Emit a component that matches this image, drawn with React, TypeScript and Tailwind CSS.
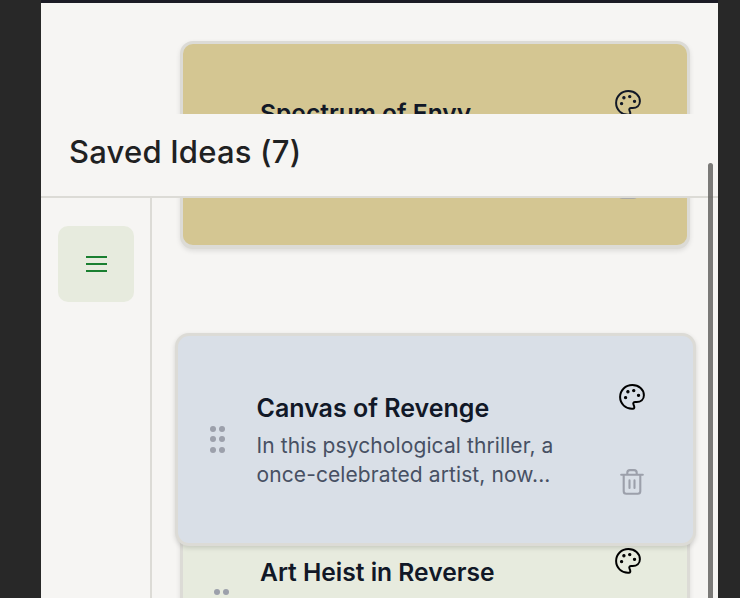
import React from "react";

function Palette({ className = "" }: { className?: string }) {
  return (
    <svg className={className} viewBox="0 0 24 24" fill="none" stroke="currentColor" strokeWidth="1.7" strokeLinecap="round" strokeLinejoin="round">
      <path d="M12.7 22.1C6.600 22.500 1.800 17.800 1.800 12.100 1.800 6.300 6.400 1.800 12.300 1.800c5.600 0 9.900 3.700 9.900 8.700 0 3.600-2.700 5.800-6.200 5.800h-1.200c-1.500 0-2.100 1-1.500 2.200l.5 1.300c.5 1.300 0 2.200-1.100 2.300Z" />
      <g fill="currentColor" strokeWidth="0.9">
        <circle cx="6.500" cy="12.500" r="1" />
        <circle cx="8.500" cy="7.500" r="1" />
        <circle cx="13.500" cy="6.500" r="1" />
        <circle cx="17.600" cy="10.600" r="1" />
      </g>
    </svg>
  );
}

function Trash({ className = "" }: { className?: string }) {
  return (
    <svg className={className} viewBox="0 0 28 28" fill="none" stroke="currentColor" strokeWidth="2.1" strokeLinecap="round" strokeLinejoin="round">
      <path d="M3.200 6.700h21.600M5.700 6.700v16.600c0 1.700.8 2.500 2.500 2.500h11.600c1.700 0 2.500-.8 2.500-2.500V6.700M9.300 6.500V4.700c0-1.700 1-2.600 2.600-2.600h4.200c1.600 0 2.600.9 2.600 2.600v1.800M11.500 12.400v7.600M16.500 12.400v7.600" />
    </svg>
  );
}

function Grip({ className = "" }: { className?: string }) {
  return (
    <div className={`grid w-[15px] grid-cols-2 gap-x-[3px] gap-y-[4.400px] ${className}`}>
      {[0, 1, 2, 3, 4, 5].map((i) => (
        <span key={i} className="size-[6px] rounded-full bg-[#9ca0ab]" />
      ))}
    </div>
  );
}

export default function App() {
  return (
    <div className="h-[598px] w-[740px] overflow-hidden bg-[#282828] pr-[22px] pl-[41px] font-['Inter',sans-serif]">
      <div className="relative flex h-full overflow-hidden border-t-[3px] border-[#1b1b25] bg-[#f6f5f3]">
        <aside className="mt-[195px] w-[111px] shrink-0 border-r-2 border-[#dcdbd6] pt-[28px] pl-[17px]">
          <button className="flex size-[76px] items-center justify-center rounded-[10px] bg-[#e7ebde]">
            <svg className="size-[28px]" viewBox="0 0 28 28" stroke="#1a7f30" strokeWidth="2">
              <path d="M4 7h21M4 14h21M4 21h21" />
            </svg>
          </button>
        </aside>

        <main className="flex flex-1 flex-col items-start pt-[38px] pl-[28px]">
          <article className="flex h-[208px] w-[510px] shrink-0 rounded-[13px] border-[3px] border-b-[4px] border-[#dcdbd6] bg-[#d4c692] pt-[51px] pl-[77px] text-[#111827] shadow-[0_2px_5px_rgba(0,0,0,0.1)]">
            <h2 className="mt-[1px] w-[354px] text-[24.600px] leading-[34px] font-semibold">Spectrum of Envy</h2>
            <div className="flex flex-col items-center">
              <Palette className="-mt-[6px] size-[28px]" />
              <Trash className="mt-[55px] size-[28px] text-[#9ca0ab]" />
            </div>
          </article>

          <article className="mt-[251px] flex h-[207px] w-[510px] shrink-0 rounded-[13px] border-[3px] border-[#dcdbd6] bg-[#e7ebde] pt-[52px] text-[#111827] shadow-[0_2px_5px_rgba(0,0,0,0.1)]">
            <Grip className="mt-[34px] ml-[31px] self-start" />
            <h2 className="ml-[31px] w-[354px] text-[24.600px] leading-[34px] font-semibold">Art Heist in Reverse</h2>
            <Palette className="-mt-[8px] size-[28px] text-black" />
          </article>
        </main>

        {/* Card being dragged, lifted above the list */}
        <article className="absolute top-[330px] left-[134px] flex h-[213px] w-[521px] rounded-[14px] border-[3px] border-[#dcdbd6] bg-[#d9dfe7] text-[#111827] shadow-[0_2px_5px_rgba(0,0,0,0.14)]">
          <Grip className="mt-[90px] ml-[32px] self-start" />
          <div className="mt-[55px] ml-[31.500px] w-[361.500px]">
            <h2 className="text-[25px] leading-[34px] font-semibold">Canvas of Revenge</h2>
            <p className="mt-[7px] text-[21px] leading-[28.500px] tracking-[0.1px] text-[#475063]">
              In this psychological thriller, a<br />once-celebrated artist, now...
            </p>
          </div>
          <div className="mt-[47px] flex flex-col items-center">
            <Palette className="size-[28px] text-black" />
            <Trash className="mt-[57px] size-[28px] text-[#9ca0ab]" />
          </div>
        </article>

        <header className="absolute inset-x-0 top-[111px] h-[84px] border-b-2 border-[#dcdbd6] bg-[#f6f5f3] pt-[18px] pl-[28px]">
          <h1 className="text-[31px] leading-[40px] font-medium tracking-[0.2px] text-[#1f2122]">Saved Ideas (7)</h1>
        </header>

        <div className="absolute top-[160px] right-[5px] h-[500px] w-[5px] rounded-full bg-[#656462]/85" />
      </div>
    </div>
  );
}
